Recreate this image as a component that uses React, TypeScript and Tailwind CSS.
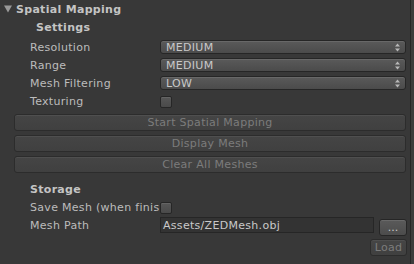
import React from "react";

const Arrow = () => (
  <svg width="5" height="9" viewBox="0 0 5 9" className="shrink-0">
    <path d="M2.5 0.5 L5 3.5 L0 3.5 Z" fill="#b8b8b8" />
    <path d="M0 5.5 L5 5.5 L2.5 8.5 Z" fill="#b8b8b8" />
  </svg>
);

const Dropdown = ({ value }: { value: string }) => (
  <div className="flex-1 h-[14px] mr-[4px] rounded-[3px] border border-[#262626] bg-gradient-to-b from-[#5a5a5a] to-[#4b4b4b] shadow-[inset_0_1px_0_#686868] flex items-center justify-between pl-[5px] pr-[5px] text-[#c9c9c9] text-[11px] leading-none tracking-[0.3px]">
    <span>{value}</span>
    <Arrow />
  </div>
);

const Checkbox = () => (
  <div className="w-[12px] h-[12px] rounded-[2px] border border-[#262626] bg-gradient-to-b from-[#575757] to-[#4a4a4a] shadow-[inset_0_1px_0_#646464]" />
);

const Row = ({ label, children }: { label: string; children?: React.ReactNode }) => (
  <div className="h-[18px] flex items-center">
    <div className="w-[160px] pl-[30px] shrink-0 overflow-hidden whitespace-nowrap text-[#bcbcbc] tracking-[0.3px]">
      {label}
    </div>
    {children}
  </div>
);

const DisabledButton = ({ text }: { text: string }) => (
  <div className="ml-[14px] mr-[4px] h-[17px] rounded-[3px] border border-[#2c2c2c] bg-gradient-to-b from-[#454545] to-[#404040] shadow-[inset_0_1px_0_#4f4f4f] flex items-center justify-center text-[#7c7c7c] text-[11px] leading-none tracking-[0.3px]">
    {text}
  </div>
);

export default function App() {
  return (
    <div
      className="w-[414px] h-[264px] bg-[#383838] flex text-[11px] leading-none"
      style={{ fontFamily: '"DejaVu Sans", sans-serif' }}
    >
      <div className="w-[410px] flex flex-col">
        <div className="h-[18px] flex items-center pl-[4px]">
          <svg width="8" height="8" viewBox="0 0 8 8" className="mr-[4px]">
            <path d="M0 0.5 L8 0.5 L4 7.5 Z" fill="#9a9a9a" />
          </svg>
          <span className="font-bold text-[#c4c4c4] tracking-[0.3px]">Spatial Mapping</span>
        </div>
        <div className="h-[18px] flex items-center pl-[36px] font-bold text-[#c4c4c4] tracking-[0.3px]">Settings</div>
        <div className="mt-[2px]">
          <Row label="Resolution"><Dropdown value="MEDIUM" /></Row>
          <Row label="Range"><Dropdown value="MEDIUM" /></Row>
          <Row label="Mesh Filtering"><Dropdown value="LOW" /></Row>
          <Row label="Texturing">
            <div className="mt-[2px]"><Checkbox /></div>
          </Row>
        </div>
        <div className="mt-[4px] flex flex-col gap-[4px]">
          <DisabledButton text="Start Spatial Mapping" />
          <DisabledButton text="Display Mesh" />
          <DisabledButton text="Clear All Meshes" />
        </div>
        <div className="mt-[7px] h-[18px] flex items-center pl-[30px] font-bold text-[#c4c4c4] tracking-[0.3px]">Storage</div>
        <div className="h-[18px] flex items-center">
          <div className="w-[160px] pl-[30px] shrink-0 overflow-hidden whitespace-nowrap text-[#bcbcbc] tracking-[0.3px]">
            Save Mesh (when finis
          </div>
          <div className="mt-[2px]"><Checkbox /></div>
        </div>
        <div className="h-[18px] flex items-start">
          <div className="w-[160px] pl-[30px] shrink-0 h-[18px] flex items-center text-[#bcbcbc] tracking-[0.3px]">Mesh Path</div>
          <div className="mt-[1px] w-[214px] h-[16px] border border-[#262626] bg-[#333333] flex items-center pl-[2px] text-[#c9c9c9] tracking-[0.3px]">
            Assets/ZEDMesh.obj
          </div>
          <div className="ml-[5px] mt-[3px] w-[28px] h-[17px] rounded-[3px] border border-[#262626] bg-gradient-to-b from-[#5a5a5a] to-[#4c4c4c] shadow-[inset_0_1px_0_#696969] flex items-center justify-center text-[#c9c9c9]">
            ...
          </div>
        </div>
        <div className="flex justify-end mr-[3px] mt-[5px]">
          <div className="w-[37px] h-[17px] rounded-[3px] border border-[#2c2c2c] bg-gradient-to-b from-[#454545] to-[#404040] shadow-[inset_0_1px_0_#4f4f4f] flex items-center justify-center text-[#7c7c7c] tracking-[0.3px]">
            Load
          </div>
        </div>
      </div>
      <div className="w-[1px] bg-[#262626]" />
      <div className="flex-1 bg-[#3c3c3c]" />
    </div>
  );
}
